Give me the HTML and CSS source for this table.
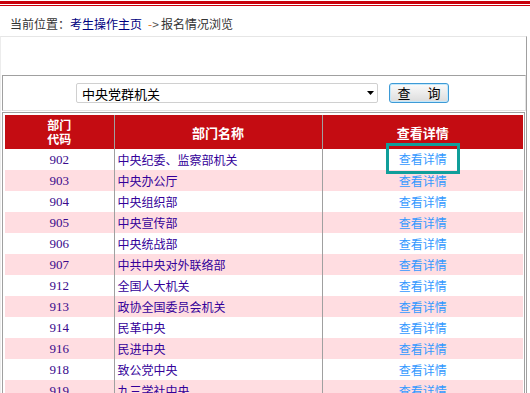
FILE: index.html
```html
<!DOCTYPE html>
<html lang="zh-CN">
<head>
<meta charset="utf-8">
<title>报名情况浏览</title>
<link rel="stylesheet" href="styles.css">
</head>
<body>
<div class="topbar"></div>
<div class="crumb">当前位置：<a class="home" href="#">考生操作主页</a><span class="arrow"><span class="dash">-</span>&gt;</span>报名情况浏览</div>
<div class="panel">
  <div class="search">
    <div class="select"><span>中央党群机关</span><svg class="caret" width="7" height="4" viewBox="0 0 7 4"><path d="M0 0H7L3.5 4Z" fill="#000"/></svg></div>
    <button class="btn" type="button"><span>查</span><span>询</span></button>
  </div>
  <div class="tablebox">
    <table class="list">
      <colgroup><col class="w1"><col class="w2"><col class="w3"></colgroup>
      <thead>
        <tr><th class="two">部门<br>代码</th><th>部门名称</th><th>查看详情</th></tr>
      </thead>
      <tbody>
        <tr><td class="code">902</td><td class="name">中央纪委、监察部机关</td><td class="act"><a class="link focus" href="#">查看详情</a></td></tr>
        <tr><td class="code">903</td><td class="name">中央办公厅</td><td class="act"><a class="link" href="#">查看详情</a></td></tr>
        <tr><td class="code">904</td><td class="name">中央组织部</td><td class="act"><a class="link" href="#">查看详情</a></td></tr>
        <tr><td class="code">905</td><td class="name">中央宣传部</td><td class="act"><a class="link" href="#">查看详情</a></td></tr>
        <tr><td class="code">906</td><td class="name">中央统战部</td><td class="act"><a class="link" href="#">查看详情</a></td></tr>
        <tr><td class="code">907</td><td class="name">中共中央对外联络部</td><td class="act"><a class="link" href="#">查看详情</a></td></tr>
        <tr><td class="code">912</td><td class="name">全国人大机关</td><td class="act"><a class="link" href="#">查看详情</a></td></tr>
        <tr><td class="code">913</td><td class="name">政协全国委员会机关</td><td class="act"><a class="link" href="#">查看详情</a></td></tr>
        <tr><td class="code">914</td><td class="name">民革中央</td><td class="act"><a class="link" href="#">查看详情</a></td></tr>
        <tr><td class="code">916</td><td class="name">民进中央</td><td class="act"><a class="link" href="#">查看详情</a></td></tr>
        <tr><td class="code">918</td><td class="name">致公党中央</td><td class="act"><a class="link" href="#">查看详情</a></td></tr>
        <tr><td class="code">919</td><td class="name">九三学社中央</td><td class="act"><a class="link" href="#">查看详情</a></td></tr>
        <tr><td class="code">920</td><td class="name">台盟中央</td><td class="act"><a class="link" href="#">查看详情</a></td></tr>
      </tbody>
    </table>
  </div>
</div>
</body>
</html>
```
FILE: styles.css
```css
html, body {
  margin: 0;
  overflow: hidden;
  background: #fff;
}
body {
  width: 530px;
  font-family: "Noto Sans CJK SC", "Noto Sans", sans-serif;
  font-size: 12px;
  color: #333;
}
.topbar {
  margin-top: 1px;
  height: 1px;
  border-top: 3px solid #c8000b;
  border-bottom: 1px solid #c8000b;
}
.crumb {
  height: 30px;
  box-sizing: border-box;
  padding: 10px 0 0 10px;
  line-height: 16px;
  white-space: nowrap;
}
.home {
  color: #000080;
  text-decoration: none;
}
.arrow {
  margin: 0 2px 0 6px;
  color: #555;
}
.dash {
  color: #e07020;
}
.panel {
  width: 527px;
  box-sizing: border-box;
  border-top: 1px solid #e6e6e6;
  border-left: 1px solid #ececec;
  border-right: 1px solid #a0a0a0;
  padding-top: 38px;
}
.search {
  margin-left: 1px;
  height: 36px;
  box-sizing: border-box;
  border-top: 1px solid #a0a0a0;
  border-left: 1px solid #a0a0a0;
  border-right: 1px solid #e3e3e3;
  border-bottom: 1px solid #e3e3e3;
  display: flex;
  align-items: center;
  padding-left: 73px;
}
.select {
  width: 302px;
  height: 20px;
  box-sizing: border-box;
  border: 1px solid #d0d0d0;
  border-radius: 2px;
  display: flex;
  align-items: center;
  justify-content: space-between;
  padding: 0 3px 0 5px;
  font-size: 13px;
  color: #000;
}
.caret {
  display: block;
}
.btn {
  margin-left: 11px;
  width: 60px;
  height: 20px;
  box-sizing: border-box;
  border: 1px solid #3d9ad6;
  border-radius: 3px;
  background: linear-gradient(#fbfbfb, #dcdcdc);
  box-shadow: inset 0 0 0 1px #c4e8fb;
  display: flex;
  align-items: center;
  justify-content: center;
  gap: 17px;
  padding: 0;
  font-family: "Noto Sans CJK SC", sans-serif;
  font-size: 13px;
  line-height: 16px;
  color: #000;
}
.tablebox {
  margin: 1px 1px 0 1px;
  border: 1px solid #a0a0a0;
  border-bottom: none;
  padding: 2px 1px 0 2px;
}
.list {
  width: 100%;
  border-collapse: collapse;
  table-layout: fixed;
}
.w1 { width: 109px; }
.w2 { width: 208px; }
.list th {
  background: #c40c12;
  color: #fff;
  font-weight: bold;
  font-size: 13px;
  height: 34px;
  padding: 0;
  line-height: 15px;
  text-align: center;
}
.list th.two {
  font-size: 12px;
  line-height: 14px;
}
.list th + th,
.list td + td {
  border-left: 1px solid #a0a0a0;
}
.list td {
  height: 21px;
  padding: 0;
  line-height: 21px;
  white-space: nowrap;
}
.list tbody tr:nth-child(even) td {
  background: #ffdde1;
}
.code {
  text-align: center;
  font-family: "Liberation Serif", serif;
  font-size: 13px;
  color: #3a0a8c;
}
.name {
  padding-left: 3px !important;
  color: #330099;
}
.act {
  text-align: center;
}
.link {
  color: #3399ff;
  text-decoration: none;
}
.focus {
  display: inline-block;
  vertical-align: top;
  border: 3px solid #109e9a;
  padding: 4px 10px;
  line-height: 17px;
  margin: -6px 0 -4px;
}
```
